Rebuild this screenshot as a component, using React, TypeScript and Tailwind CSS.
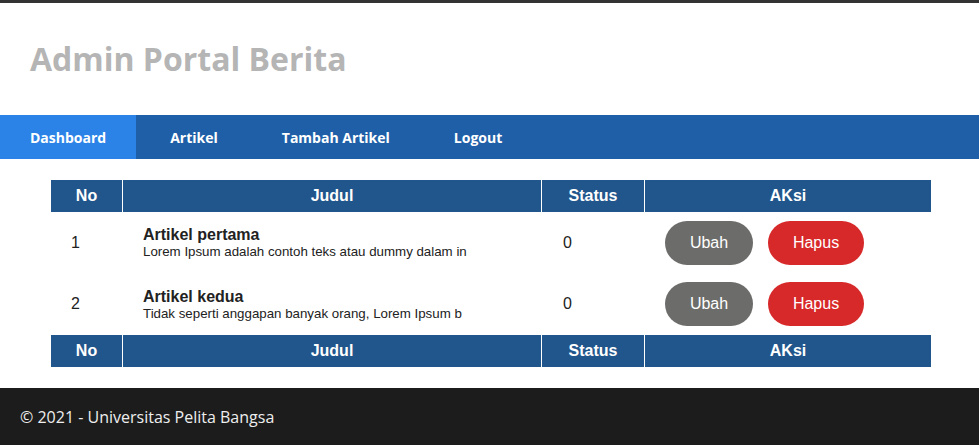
const rows = [
  { no: 1, title: "Artikel pertama", desc: "Lorem Ipsum adalah contoh teks atau dummy dalam in", status: 0 },
  { no: 2, title: "Artikel kedua", desc: "Tidak seperti anggapan banyak orang, Lorem Ipsum b", status: 0 },
]

const menu = ["Dashboard", "Artikel", "Tambah Artikel", "Logout"]

function HeadRow() {
  return (
    <>
      <div className="bg-[#21568c] h-[32px] flex items-center justify-center font-bold">No</div>
      <div className="bg-[#21568c] h-[32px] flex items-center justify-center font-bold">Judul</div>
      <div className="bg-[#21568c] h-[32px] flex items-center justify-center font-bold">Status</div>
      <div className="bg-[#21568c] h-[32px] flex items-center justify-center font-bold">AKsi</div>
    </>
  )
}

export default function App() {
  return (
    <div className="min-h-[445px] bg-white font-['Open_Sans',sans-serif]">
      <header className="border-t-[3px] border-[#333333] h-[115px] flex items-center px-[30px]">
        <h1 className="text-[32px] font-bold text-[#b5b5b5] leading-none">Admin Portal Berita</h1>
      </header>

      <nav className="bg-[#1f5fa8] h-[44px] flex gap-[4px]">
        {menu.map((m, i) => (
          <a
            key={m}
            className={
              "px-[30px] flex items-center text-[14px] font-bold text-white " +
              (i === 0 ? "bg-[#2c83e7]" : "")
            }
          >
            {m}
          </a>
        ))}
      </nav>

      <main className="py-[21px] pl-[51px]">
        <div className="grid grid-cols-[71px_418px_102px_286px] gap-x-px text-white font-['Liberation_Sans',Arial,sans-serif] text-[16px]">
          <HeadRow />
          {rows.map((r) => (
            <div key={r.no} className="contents">
              <div className="h-[61.5px] flex items-center pl-[20px] text-[#222]">{r.no}</div>
              <div className="h-[61.5px] flex flex-col justify-center pl-[20px] text-[#222]">
                <div className="font-bold leading-[18px]">{r.title}</div>
                <div className="text-[13.3px] leading-[15px]">{r.desc}</div>
              </div>
              <div className="h-[61.5px] flex items-center pl-[21px] text-[#222]">{r.status}</div>
              <div className="h-[61.5px] flex items-center pl-[20px] gap-[15px]">
                <button className="h-[44px] w-[88px] rounded-[22px] bg-[#6c6d6a] text-white text-[16px]">Ubah</button>
                <button className="h-[44px] w-[96px] rounded-[22px] bg-[#d7292a] text-white text-[16px]">Hapus</button>
              </div>
            </div>
          ))}
          <HeadRow />
        </div>
      </main>

      <footer className="bg-[#1c1c1c] h-[57px] flex items-center px-[20px] text-[16px] text-[#eeeeee]">
        © 2021 - Universitas Pelita Bangsa
      </footer>
    </div>
  )
}
